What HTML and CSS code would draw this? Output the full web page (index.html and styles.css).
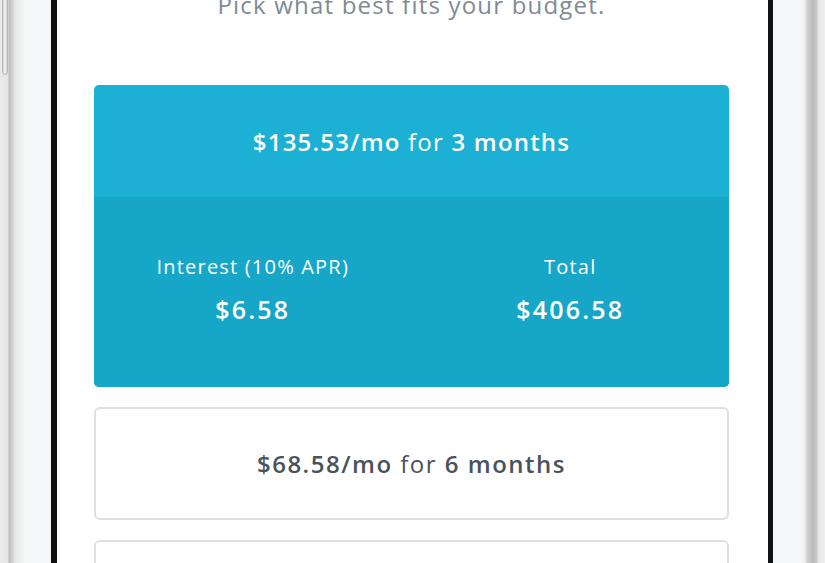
FILE: index.html
```html
<!DOCTYPE html>
<html>
<head>
<meta charset="utf-8">
<link rel="stylesheet" href="styles.css">
</head>
<body>
<div class="phone">
  <div class="frame frame-left">
    <div class="side-button"></div>
  </div>
  <div class="bezel bezel-left"></div>
  <div class="screen">
    <p class="subtitle">Pick what best fits your budget.</p>
    <div class="plans">
      <div class="plan plan-selected">
        <div class="plan-head"><b>$135.53/mo</b> for <b>3 months</b></div>
        <div class="plan-details">
          <div class="detail">
            <div class="detail-label">Interest (10% APR)</div>
            <div class="detail-value">$6.58</div>
          </div>
          <div class="detail">
            <div class="detail-label">Total</div>
            <div class="detail-value">$406.58</div>
          </div>
        </div>
      </div>
      <div class="plan">
        <div class="plan-head"><b>$68.58/mo</b> for <b>6 months</b></div>
      </div>
      <div class="plan">
        <div class="plan-head"></div>
      </div>
    </div>
  </div>
  <div class="bezel bezel-right"></div>
  <div class="frame frame-right"></div>
</div>
</body>
</html>
```
FILE: styles.css
```css
html, body {
  margin: 0;
  padding: 0;
  background: #ffffff;
}
body {
  width: 825px;
  height: 563px;
  overflow: hidden;
  font-family: "Open Sans", Lato, sans-serif;
}
.phone {
  display: flex;
  height: 563px;
}
.frame {
  position: relative;
  height: 100%;
}
.frame-left {
  width: 51px;
  background: linear-gradient(to right,
    #ebebeb 0px, #e4e4e4 8px,
    #bdbdbd 9px, #cfcfcf 12px, #e6e6e6 15px,
    #eeeeee 20px, #f6f7f8 25px, #f6f7f8 50px, #e9e9e9 51px);
}
.side-button {
  position: absolute;
  left: 2px;
  top: -10px;
  width: 6px;
  height: 85px;
  border-radius: 0 0 3px 3px;
  background: linear-gradient(to right, #cfcfcf, #f2f2f2 40%, #d8d8d8);
  border: 1px solid #b8b8b8;
  box-sizing: border-box;
}
.frame-right {
  width: 52px;
  background: linear-gradient(to right,
    #f6f7f8 0px, #f6f7f8 27px, #eeeeee 32px,
    #d2d2d2 34px, #b9b9b9 40px, #c8c8c8 44px,
    #e6e6e6 45px, #efefef 52px);
}
.bezel {
  background: #111111;
}
.bezel-left {
  width: 6px;
}
.bezel-right {
  width: 5px;
}
.screen {
  flex: 1;
  background: #ffffff;
  padding: 0 39px 0 37px;
}
.subtitle {
  margin: -10px 0 0 0;
  text-align: center;
  font-size: 24px;
  line-height: 30px;
  letter-spacing: 1.2px;
  color: #808a96;
}
.plans {
  margin-top: 65px;
  display: flex;
  flex-direction: column;
  gap: 20px;
}
.plan {
  border: 2px solid #dcdfe3;
  border-radius: 6px;
  background: #ffffff;
  color: #4a525b;
}
.plan-head {
  height: 109px;
  display: flex;
  align-items: center;
  justify-content: center;
  font-size: 24px;
  letter-spacing: 1.5px;
  white-space: pre;
}
.plan-head b {
  font-weight: 600;
}
.plan-selected {
  border: none;
  border-radius: 5px;
  overflow: hidden;
  color: #ffffff;
  background: #1cb0d4;
}
.plan-selected .plan-head {
  height: 112px;
  letter-spacing: 1.2px;
}
.plan-details {
  background: #15a6c8;
  height: 190px;
  display: flex;
}
.detail {
  flex: 1;
  text-align: center;
  padding-top: 57px;
}
.detail-label {
  font-size: 20px;
  line-height: 26px;
  letter-spacing: 1.2px;
}
.detail-value {
  margin-top: 14px;
  font-size: 25px;
  line-height: 30px;
  letter-spacing: 2.2px;
  font-weight: 600;
}
```
